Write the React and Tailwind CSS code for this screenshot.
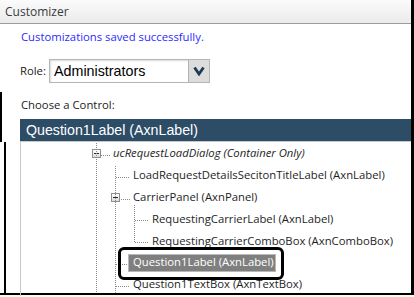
import { Fragment } from 'react'

const ui = { fontFamily: '"Open Sans", "Noto Sans", sans-serif' }
const arial = { fontFamily: '"Liberation Sans", Arial, sans-serif' }

function Expander() {
  return (
    <span className="flex h-[9px] w-[9px] shrink-0 items-center justify-center border border-[#8f8f8f] bg-gradient-to-b from-white to-[#dcdcdc]">
      <span className="h-px w-[5px] bg-[#2b2b2b]" />
    </span>
  )
}

// pl values are page x positions (row is pulled back to the page edge)
const rows = [
  { text: 'ucRequestLoadDialog (Container Only)', indent: 'pl-[92px]', gap: 'ml-[12px]', box: true, italic: true },
  { text: 'LoadRequestDetailsSecitonTitleLabel (AxnLabel)', indent: 'pl-[133px]' },
  { text: 'CarrierPanel (AxnPanel)', indent: 'pl-[111px]', gap: 'ml-[13px]', box: true },
  { text: 'RequestingCarrierLabel (AxnLabel)', indent: 'pl-[152px]' },
  { text: 'RequestingCarrierComboBox (AxnComboBox)', indent: 'pl-[152px]' },
  { text: 'Question1Label (AxnLabel)', indent: 'pl-[128px]', selected: true },
  { text: 'Question1TextBox (AxnTextBox)', indent: 'pl-[133px]' },
]

// dotted guide lines of the tree, page coordinates
function TreeLines() {
  const dot = { stroke: '#8a8a8a', strokeWidth: 1, strokeDasharray: '1 1' }
  return (
    <svg className="pointer-events-none absolute left-0 top-0" width="414" height="297">
      <line x1="96.5" y1="143" x2="96.5" y2="293" {...dot} />
      <line x1="101" y1="155.5" x2="110" y2="155.5" {...dot} />
      <line x1="115.5" y1="166" x2="115.5" y2="293" {...dot} />
      <line x1="116" y1="177.5" x2="130" y2="177.5" {...dot} />
      <line x1="121" y1="199.5" x2="130" y2="199.5" {...dot} />
      <line x1="134.5" y1="205" x2="134.5" y2="242" {...dot} />
      <line x1="135" y1="220.5" x2="149" y2="220.5" {...dot} />
      <line x1="135" y1="242.5" x2="149" y2="242.5" {...dot} />
      <line x1="116" y1="264.5" x2="127" y2="264.5" {...dot} />
      <line x1="116" y1="286.5" x2="130" y2="286.5" {...dot} />
    </svg>
  )
}

export default function App() {
  return (
    <div className="relative h-[297px] w-[414px] overflow-hidden bg-[#fffde6]">
      <div className="flex h-[295px] w-[414px] flex-col border-b-2 border-r-[3px] border-black bg-white">
        <div className="h-[24px] border-b border-[#9c9c9c] bg-gradient-to-b from-[#fbfbfb] to-[#ebebeb] pl-[5px] text-[12px] leading-[23px] text-[#3a3a3a]" style={ui}>
          Customizer
        </div>

        <div className="flex flex-1 flex-col pl-[20px]" style={ui}>
          <div className="mt-[5px] h-[16px] pl-px text-[11.3px] leading-[16px] text-[#2b2bff]">Customizations saved successfully.</div>

          <div className="mt-[14px] flex h-[24px] items-center">
            <span className="w-[29px] text-[11.3px] text-[#222]">Role:</span>
            <div className="flex h-[24px] w-[161px] border border-[#b5b5b5] bg-white shadow-[inset_1px_1px_2px_rgba(0,0,0,0.15)]">
              <span className="flex-1 pl-[4px] text-[14.3px] leading-[22px] text-black" style={arial}>Administrators</span>
              <span className="flex w-[21px] items-center justify-center border-l border-[#b0b0b0] bg-[#dcdcdc]">
                <svg width="12" height="10" viewBox="0 0 12 10">
                  <polyline points="1.5,1.5 6,8 10.5,1.5" fill="none" stroke="#203a52" strokeWidth="2.8" strokeLinejoin="miter" />
                </svg>
              </span>
            </div>
          </div>

          <div className="mt-[14px] h-[16px] pl-px text-[11.3px] leading-[16px] text-[#222]">Choose a Control:</div>

          <div className="mt-[6px] h-[22px] bg-[#2d4c66] pl-[6px] text-[14.2px] leading-[22px] text-white" style={arial}>
            Question1Label (AxnLabel)
          </div>

          <div className="flex flex-1 flex-col border-l border-t border-[#c9c9c9] pt-px">
            {rows.map((r) => (
              <div key={r.text} className={`-ml-[21px] flex h-[21.8px] shrink-0 items-center ${r.indent} text-[11.3px] text-[#1e1e1e]`}>
                {r.box ? (
                  <Fragment>
                    <Expander />
                    <span className={`${r.gap} ${r.italic ? 'italic' : ''} whitespace-nowrap`}>{r.text}</span>
                  </Fragment>
                ) : r.selected ? (
                  <span className="flex h-[18px] w-[148px] items-center whitespace-nowrap border border-[#b8b8b8] bg-[#7f7f7f] pl-[4px] text-white">{r.text}</span>
                ) : (
                  <span className="whitespace-nowrap">{r.text}</span>
                )}
              </div>
            ))}
          </div>
        </div>
      </div>

      <TreeLines />

      {/* crop edges along the left side */}
      <div className="absolute left-0 top-[92px] h-[50px] w-[2px] bg-black" />
      <div className="absolute left-[4px] top-[142px] h-[152px] w-[2px] bg-black" />

      {/* callout around the selected node */}
      <div className="absolute left-[118px] top-[247px] h-[33px] w-[166px] rounded-[6px] border-[3px] border-black" />
    </div>
  )
}
